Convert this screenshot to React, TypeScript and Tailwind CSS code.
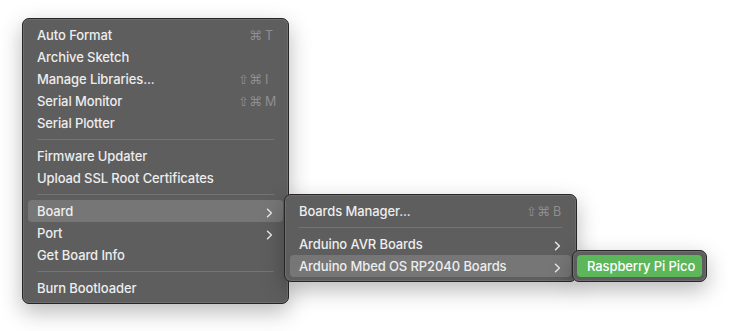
import React from "react";

type Item =
  | { sep: true }
  | { label: string; mods?: string; key?: string; sub?: boolean; active?: boolean };

const mainItems: Item[] = [
  { label: "Auto Format", mods: "⌘", key: "T" },
  { label: "Archive Sketch" },
  { label: "Manage Libraries...", mods: "⇧⌘", key: "I" },
  { label: "Serial Monitor", mods: "⇧⌘", key: "M" },
  { label: "Serial Plotter" },
  { sep: true },
  { label: "Firmware Updater" },
  { label: "Upload SSL Root Certificates" },
  { sep: true },
  { label: "Board", sub: true, active: true },
  { label: "Port", sub: true },
  { label: "Get Board Info" },
  { sep: true },
  { label: "Burn Bootloader" },
];

const boardItems: Item[] = [
  { label: "Boards Manager...", mods: "⇧⌘", key: "B" },
  { sep: true },
  { label: "Arduino AVR Boards", sub: true },
  { label: "Arduino Mbed OS RP2040 Boards", sub: true, active: true },
];

function Chevron() {
  return (
    <svg width="7" height="10" viewBox="0 0 7 10" className="mr-[6px] mt-[1px]">
      <path d="M1.5 1.2 L5.4 5 L1.5 8.8" fill="none" stroke="#e6e6e6" strokeWidth="1.5" strokeLinecap="round" strokeLinejoin="round" />
    </svg>
  );
}

function Menu({ items, className }: { items: Item[]; className: string }) {
  return (
    <div
      className={
        "rounded-[7px] border border-[#262626] bg-[#5e5e5e] pt-[5px] pb-[4px] shadow-[inset_0_0_0_1px_rgba(255,255,255,0.1),0_8px_22px_rgba(0,0,0,0.28)] " +
        className
      }
    >
      {items.map((it, i) =>
        "sep" in it ? (
          <div key={i} className="flex h-[11px] items-center px-[14px]">
            <div className="h-px w-full bg-[#747474]" />
          </div>
        ) : (
          <div
            key={i}
            className={
              "mx-[5px] flex h-[22px] items-center justify-between rounded-[4px] pl-[9px] pr-[4px] pt-[2px] " +
              (it.active ? "bg-[#767676]" : "")
            }
          >
            <span className="text-[13px] font-medium tracking-[-0.1px] text-[#ededed]">{it.label}</span>
            {it.sub ? (
              <Chevron />
            ) : it.key ? (
              <span className="flex items-center text-[12.5px] text-[#8f8f8f]">
                <span className="font-['DejaVu_Sans',sans-serif] text-[13px]">{it.mods}</span>
                <span className="ml-[3px] w-[14px]">{it.key}</span>
              </span>
            ) : null}
          </div>
        )
      )}
    </div>
  );
}

export default function App() {
  return (
    <div className="relative h-[331px] w-[730px] overflow-hidden bg-white font-['Inter',sans-serif]">
      <div className="pl-[22px] pt-[18px]">
        <Menu items={mainItems} className="w-[267px]" />
      </div>

      {/* Board submenu */}
      <div className="absolute left-[284px] top-[194px]">
        <Menu items={boardItems} className="w-[293px]" />
      </div>

      {/* RP2040 boards submenu */}
      <div className="absolute left-[572px] top-[250px] w-[135px] rounded-[7px] border border-[#262626] bg-[#5e5e5e] p-[4px] shadow-[inset_0_0_0_1px_rgba(255,255,255,0.1),0_8px_22px_rgba(0,0,0,0.28)]">
        <div className="flex h-[22px] items-center rounded-[4px] bg-[#5cb65a] pl-[10px] pt-[2px] text-[13px] font-medium tracking-[-0.1px] text-white">
          Raspberry Pi Pico
        </div>
      </div>
    </div>
  );
}
